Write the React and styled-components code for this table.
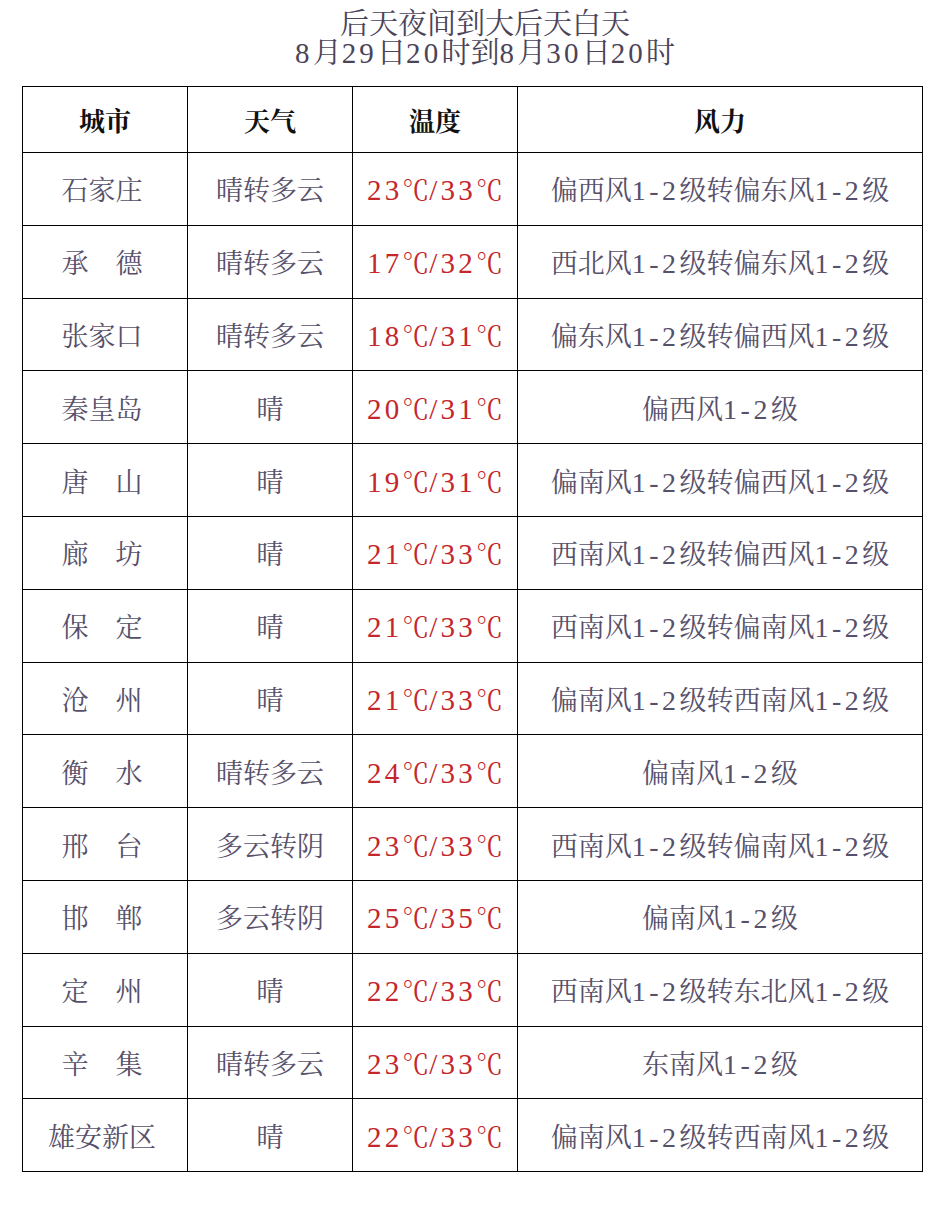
import styled, { createGlobalStyle } from 'styled-components'

const GlobalStyle = createGlobalStyle`
  body {
    margin: 0;
    background: #ffffff;
    font-family: "Noto Serif CJK SC", "Noto Sans CJK SC", serif;
  }
`

const Page = styled.div`
  width: 942px;
  padding-top: 7px;
`

const Title = styled.h1`
  margin: 0 0 21px 0;
  padding-left: 28px;
  text-align: center;
  font-weight: normal;
  font-size: 29px;
  color: #4b4459;
`

const TitleLine = styled.div`
  height: 29px;
  line-height: 29px;
`

// latin digits in the source are wide, spaced out serif figures
const Num = styled.span`
  display: inline-block;
  line-height: 1;
  font-family: "Liberation Serif", serif;
  font-size: ${(p) => p.$size || 28}px;
  letter-spacing: ${(p) => p.$gap || 3.5}px;
`

const Table = styled.table`
  margin-left: 22px;
  width: 900px;
  border-collapse: collapse;
  table-layout: fixed;
`

const Col = styled.col`
  width: ${(p) => p.$w}px;
`

const HeadCell = styled.th`
  border: 1px solid #000;
  height: 65px;
  padding: 0;
  font-size: 26px;
  font-weight: bold;
  color: #111;
  text-align: center;
`

const Cell = styled.td`
  border: 1px solid #000;
  height: 71.8px;
  padding: 0 ${(p) => p.$nudge || 0}px 0 0;
  font-size: 27px;
  text-align: center;
  color: ${(p) => (p.$hot ? '#c4262b' : '#57506a')};
  white-space: nowrap;
`

const withNums = (text, size, gap) =>
  text.split(/([0-9\-/]+)/).map((part, i) =>
    /^[0-9\-/]+$/.test(part) ? (
      <Num key={i} $size={size} $gap={gap}>{part}</Num>
    ) : (
      part
    )
  )

const rows = [
  ['石家庄', '晴转多云', '23℃/33℃', '偏西风1-2级转偏东风1-2级'],
  ['承　德', '晴转多云', '17℃/32℃', '西北风1-2级转偏东风1-2级'],
  ['张家口', '晴转多云', '18℃/31℃', '偏东风1-2级转偏西风1-2级'],
  ['秦皇岛', '晴', '20℃/31℃', '偏西风1-2级'],
  ['唐　山', '晴', '19℃/31℃', '偏南风1-2级转偏西风1-2级'],
  ['廊　坊', '晴', '21℃/33℃', '西南风1-2级转偏西风1-2级'],
  ['保　定', '晴', '21℃/33℃', '西南风1-2级转偏南风1-2级'],
  ['沧　州', '晴', '21℃/33℃', '偏南风1-2级转西南风1-2级'],
  ['衡　水', '晴转多云', '24℃/33℃', '偏南风1-2级'],
  ['邢　台', '多云转阴', '23℃/33℃', '西南风1-2级转偏南风1-2级'],
  ['邯　郸', '多云转阴', '25℃/35℃', '偏南风1-2级'],
  ['定　州', '晴', '22℃/33℃', '西南风1-2级转东北风1-2级'],
  ['辛　集', '晴转多云', '23℃/33℃', '东南风1-2级'],
  ['雄安新区', '晴', '22℃/33℃', '偏南风1-2级转西南风1-2级'],
]

const App = () => {
  return (
    <Page>
      <GlobalStyle />
      <Title>
        <TitleLine>后天夜间到大后天白天</TitleLine>
        <TitleLine>{withNums('8月29日20时到8月30日20时', 29, 3.2)}</TitleLine>
      </Title>
      <Table>
        <colgroup>
          <Col $w={165} />
          <Col $w={165} />
          <Col $w={165} />
          <Col $w={405} />
        </colgroup>
        <thead>
          <tr>
            <HeadCell>城市</HeadCell>
            <HeadCell>天气</HeadCell>
            <HeadCell>温度</HeadCell>
            <HeadCell>风力</HeadCell>
          </tr>
        </thead>
        <tbody>
          {rows.map((r, i) => (
            <tr key={i}>
              <Cell $nudge={6}>{r[0]}</Cell>
              <Cell>{r[1]}</Cell>
              <Cell $hot>{withNums(r[2], 29, 3.2)}</Cell>
              <Cell>{withNums(r[3], 28, 3.5)}</Cell>
            </tr>
          ))}
        </tbody>
      </Table>
    </Page>
  )
}

export default App
